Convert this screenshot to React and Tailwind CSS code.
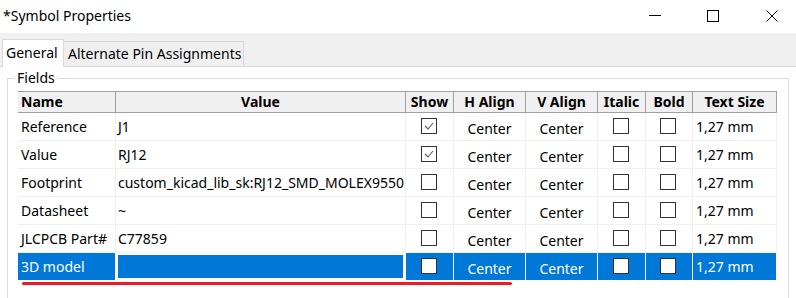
const cols = [
  { key: 'name', label: 'Name', w: 'w-[98px]', align: 'left' },
  { key: 'value', label: 'Value', w: 'w-[290px]' },
  { key: 'show', label: 'Show', w: 'w-[48px]' },
  { key: 'h', label: 'H Align', w: 'w-[72px]' },
  { key: 'v', label: 'V Align', w: 'w-[72px]' },
  { key: 'italic', label: 'Italic', w: 'w-[48px]' },
  { key: 'bold', label: 'Bold', w: 'w-[47px]' },
  { key: 'size', label: 'Text Size', w: 'w-[84px]' },
];

const rows = [
  { name: 'Reference', value: 'J1', show: true },
  { name: 'Value', value: 'RJ12', show: true },
  { name: 'Footprint', value: 'custom_kicad_lib_sk:RJ12_SMD_MOLEX95501-2661', show: false },
  { name: 'Datasheet', value: '~', show: false },
  { name: 'JLCPCB Part#', value: 'C77859', show: false },
  { name: '3D model', value: '', show: false, selected: true },
];

function Check({ checked }) {
  return (
    <div className="h-[16px] w-[16px] border border-[#333333] bg-white">
      {checked && (
        <svg viewBox="0 0 14 14" className="h-[14px] w-[14px]">
          <polyline points="3,7 6,10 11,4" fill="none" stroke="#5a5a5a" strokeWidth="1.1" />
        </svg>
      )}
    </div>
  );
}

function Row({ row }) {
  const sel = row.selected;
  const line = sel ? 'border-white' : 'border-[#f0f0f0]';
  const txt = sel ? 'text-white' : 'text-black';
  const base = `h-[28px] shrink-0 border-r border-b ${line} ${sel ? 'bg-[#0078d7]' : 'bg-white'}`;
  return (
    <div className="flex">
      <div className={`${base} w-[98px] flex items-center pl-[3px] pb-[1px] ${txt}`}>{row.name}</div>
      {sel ? (
        <div className="h-[28px] w-[290px] shrink-0 border-b border-white bg-white p-[2px] pr-[3px]">
          <div className="h-full w-full bg-[#0078d7]" />
        </div>
      ) : (
        <div className={`${base} w-[290px] flex items-center overflow-hidden whitespace-nowrap pl-[2px] pb-[1px] ${txt}`}>
          {row.value}
        </div>
      )}
      <div className={`${base} w-[48px] flex items-center justify-center pb-[2px] pr-[2px]`}>
        <Check checked={row.show} />
      </div>
      <div className={`${base} w-[72px] flex items-center justify-center pt-[4px] ${txt}`}>Center</div>
      <div className={`${base} w-[72px] flex items-center justify-center pt-[4px] ${txt}`}>Center</div>
      <div className={`${base} w-[48px] flex items-center justify-center pb-[2px] pr-[2px]`}>
        <Check />
      </div>
      <div className={`${base} w-[47px] flex items-center justify-center pb-[2px] pr-[2px]`}>
        <Check />
      </div>
      <div className={`${base} w-[84px] flex items-center pl-[3px] pb-[1px] ${txt}`}>1,27 mm</div>
    </div>
  );
}

export default function App() {
  return (
    <div className="relative flex h-[298px] w-[796px] flex-col overflow-hidden bg-[#f0f0f0] text-[14px] text-black font-['Noto_Sans',sans-serif]">
      {/* title bar */}
      <div className="flex h-[33px] shrink-0 items-center justify-between bg-white">
        <span className="pl-[3px] pb-[2px] text-[14px]">*Symbol Properties</span>
        <div className="flex items-center pr-[18px] pb-[2px]">
          <div className="mr-[46px] h-px w-[12px] bg-black" />
          <div className="mr-[47px] h-[12px] w-[12px] border border-black" />
          <svg viewBox="0 0 12 12" className="h-[12px] w-[12px]">
            <path d="M0.5 0.5 L11.5 11.5 M11.5 0.5 L0.5 11.5" stroke="black" strokeWidth="1" fill="none" />
          </svg>
        </div>
      </div>

      {/* tabs */}
      <div className="flex h-[33px] shrink-0 items-end pl-[2px]">
        <div className="relative z-10 -mb-px flex h-[28px] w-[62px] items-center border border-b-0 border-[#d9d9d9] bg-white pl-[3px] pb-[2px]">
          General
        </div>
        <div className="flex h-[25px] w-[180px] items-center border border-l-0 border-b-0 border-[#d9d9d9] pl-[4px] pb-[1px]">
          Alternate Pin Assignments
        </div>
      </div>

      {/* panel */}
      <div className="flex-1 border-t border-[#d9d9d9] bg-white pt-[11px]">
        <div className="relative ml-[7px] h-[300px] w-[782px] border border-[#dcdcdc] pl-[10px] pt-[12px]">
          <span className="absolute -top-[11px] left-[7px] bg-white px-[2px] leading-[20px]">Fields</span>

          <div className="flex w-[759px] border-t border-b border-[#a0a0a0] bg-[#f0f0f0] font-bold">
            {cols.map((c) => (
              <div
                key={c.key}
                className={`${c.w} flex h-[20px] shrink-0 items-center border-r border-[#a0a0a0] pb-[1px] ${c.align === 'left' ? 'pl-[3px]' : 'justify-center'}`}
              >
                {c.label}
              </div>
            ))}
          </div>
          {rows.map((r) => (
            <Row key={r.name} row={r} />
          ))}
        </div>
      </div>

      {/* red annotation stroke */}
      <div className="absolute left-[22px] top-[282px] h-[3px] w-[490px] rounded-full bg-[#ed1c24]" />
    </div>
  );
}
